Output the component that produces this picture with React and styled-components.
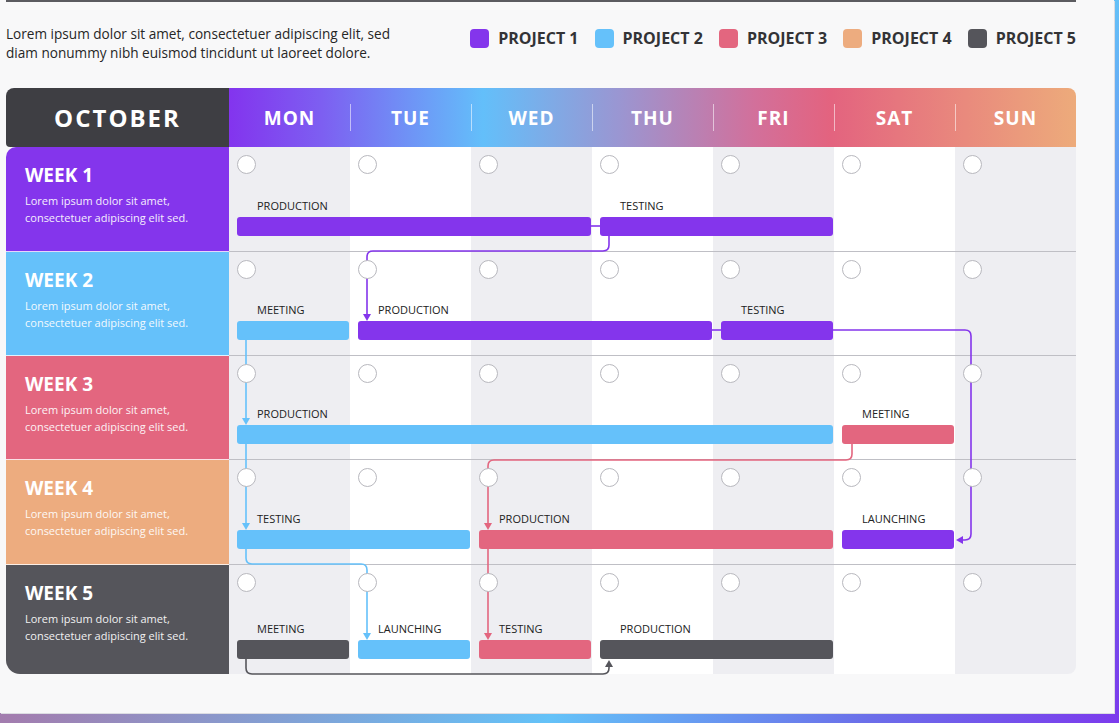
import styled, { createGlobalStyle } from "styled-components";

const GlobalStyle = createGlobalStyle`
  html, body {
    margin: 0;
    padding: 0;
  }
  body {
    width: 1119px;
    height: 723px;
    overflow: hidden;
    background: linear-gradient(128deg, #b07a9c 0%, #a27daf 34%, #64c2f8 66%, #6b6ee9 85%, #7c3aed 100%);
    font-family: "Open Sans", "Liberation Sans", sans-serif;
  }
`;

const colors = {
  1: "#8435ec",
  2: "#65c1fa",
  3: "#e3667f",
  4: "#edac7f",
  5: "#55555b",
};

const days = ["MON", "TUE", "WED", "THU", "FRI", "SAT", "SUN"];

const weeks = [
  {
    name: "WEEK 1",
    color: colors[1],
    height: 105,
    tasks: [
      { label: "PRODUCTION", project: 1, from: 0, to: 2 },
      { label: "TESTING", project: 1, from: 3, to: 4 },
    ],
  },
  {
    name: "WEEK 2",
    color: colors[2],
    height: 104,
    tasks: [
      { label: "MEETING", project: 2, from: 0, to: 0 },
      { label: "PRODUCTION", project: 1, from: 1, to: 3 },
      { label: "TESTING", project: 1, from: 4, to: 4 },
    ],
  },
  {
    name: "WEEK 3",
    color: colors[3],
    height: 104,
    tasks: [
      { label: "PRODUCTION", project: 2, from: 0, to: 4 },
      { label: "MEETING", project: 3, from: 5, to: 5 },
    ],
  },
  {
    name: "WEEK 4",
    color: colors[4],
    height: 105,
    tasks: [
      { label: "TESTING", project: 2, from: 0, to: 1 },
      { label: "PRODUCTION", project: 3, from: 2, to: 4 },
      { label: "LAUNCHING", project: 1, from: 5, to: 5 },
    ],
  },
  {
    name: "WEEK 5",
    color: colors[5],
    height: 109,
    tasks: [
      { label: "MEETING", project: 5, from: 0, to: 0 },
      { label: "LAUNCHING", project: 2, from: 1, to: 1 },
      { label: "TESTING", project: 3, from: 2, to: 2 },
      { label: "PRODUCTION", project: 5, from: 3, to: 4 },
    ],
  },
];

// connector lines, in page coordinates (svg viewBox starts at the table corner)
const links = [
  { color: colors[1], d: "M591 226 H600" },
  { color: colors[1], d: "M609 236 V245 Q609 251 603 251 H373 Q367 251 367 257 V315", arrow: "M363 314 L371 314 L367 321 Z" },
  { color: colors[1], d: "M712 330 H721" },
  { color: colors[1], d: "M833 330 H965 Q971 330 971 336 V534 Q971 540 965 540 H962", arrow: "M963 536 L963 544 L956 540 Z" },
  { color: colors[2], d: "M246 340 V419", arrow: "M242 418 L250 418 L246 425 Z" },
  { color: colors[2], d: "M246 444 V524", arrow: "M242 523 L250 523 L246 530 Z" },
  { color: colors[2], d: "M246 549 V558 Q246 564 252 564 H361 Q367 564 367 570 V634", arrow: "M363 633 L371 633 L367 640 Z" },
  { color: colors[3], d: "M852 444 V454 Q852 460 846 460 H494 Q488 460 488 466 V524", arrow: "M484 523 L492 523 L488 530 Z" },
  { color: colors[3], d: "M488 549 V634", arrow: "M484 633 L492 633 L488 640 Z" },
  { color: colors[5], d: "M246 659 V668 Q246 674 252 674 H603 Q609 674 609 668 V666", arrow: "M605 667 L613 667 L609 660 Z" },
];

const Page = styled.div`
  width: 1114px;
  height: 713px;
  box-sizing: border-box;
  padding: 0 38px 0 6px;
  background: #f8f8f9;
  box-shadow: 1px 1px 0 #dcdce2;
`;

const TopRule = styled.div`
  height: 2px;
  background: #5b5b60;
`;

const TopBar = styled.div`
  display: flex;
  justify-content: space-between;
  align-items: flex-start;
  margin-top: 22px;
`;

const Intro = styled.p`
  margin: 0;
  font-size: 13.6px;
  line-height: 19px;
  color: #262626;
`;

const Legend = styled.div`
  display: flex;
  gap: 16px;
  margin-top: 3px;
`;

const LegendItem = styled.div`
  display: flex;
  align-items: center;
  gap: 9px;
  font-size: 16px;
  font-weight: 700;
  line-height: 22px;
  color: #333336;
`;

const Swatch = styled.span`
  width: 19px;
  height: 19px;
  border-radius: 4px;
  background: ${(p) => p.$color};
`;

const Table = styled.div`
  position: relative;
  width: 1070px;
  margin-top: 26px;
`;

const HeaderRow = styled.div`
  display: grid;
  grid-template-columns: 223px 1fr;
  height: 59px;
`;

const MonthCell = styled.div`
  display: flex;
  align-items: center;
  justify-content: center;
  background: #3e3e43;
  border-radius: 8px 0 0 4px;
  color: #fff;
  font-size: 24px;
  font-weight: 700;
  letter-spacing: 2px;
`;

const DaysBar = styled.div`
  display: grid;
  grid-template-columns: repeat(7, 1fr);
  border-radius: 0 8px 0 0;
  background: linear-gradient(
    90deg,
    #8334ee 0%,
    #7d5ff1 11%,
    #63bffa 30%,
    #9a96d2 46%,
    #d2709b 62%,
    #e3637f 71%,
    #e98a7d 87%,
    #edab7b 100%
  );
`;

const DayHead = styled.div`
  position: relative;
  display: flex;
  align-items: center;
  justify-content: center;
  color: #fff;
  font-size: 19px;
  font-weight: 700;
  letter-spacing: 1px;

  &:not(:first-child)::before {
    content: "";
    position: absolute;
    left: 0;
    top: 16px;
    width: 1px;
    height: 27px;
    background: rgba(255, 255, 255, 0.55);
  }
`;

const WeekRow = styled.div`
  display: grid;
  grid-template-columns: 223px repeat(7, 121px);
  height: ${(p) => p.$height}px;
`;

const WeekCell = styled.div`
  grid-row: 1;
  grid-column: 1;
  box-sizing: border-box;
  padding: 15px 0 0 19px;
  background: ${(p) => p.$color};
  border-bottom: ${(p) => (p.$last ? "none" : "1px solid rgba(255, 255, 255, 0.8)")};
  border-radius: ${(p) => (p.$first ? "10px 0 0 0" : p.$last ? "0 0 0 14px" : "0")};
  color: #fff;
`;

const WeekTitle = styled.div`
  font-size: 19px;
  font-weight: 700;
  line-height: 26px;
`;

const WeekText = styled.div`
  margin-top: 4px;
  font-size: 11px;
  line-height: 17px;
  opacity: 0.92;
`;

const DayCell = styled.div`
  grid-row: 1;
  grid-column: ${(p) => p.$col + 2};
  box-sizing: border-box;
  padding: 8px 0 0 8px;
  background: ${(p) => (p.$col % 2 === 0 ? "#eeeef2" : "#ffffff")};
  border-bottom: ${(p) => (p.$last ? "none" : "1px solid #bfbfc5")};
  border-radius: ${(p) => (p.$last && p.$col === 6 ? "0 0 8px 0" : "0")};
`;

const Circle = styled.div`
  position: relative;
  z-index: 2;
  width: 19px;
  height: 19px;
  box-sizing: border-box;
  border: 1.5px solid #b8b8be;
  border-radius: 50%;
  background: #fff;
`;

const Task = styled.div`
  position: relative;
  z-index: 2;
  grid-row: 1;
  grid-column: ${(p) => `${p.$from + 2} / ${p.$to + 3}`};
  align-self: end;
  margin: 0 1px ${(p) => (p.$last ? 15 : 16)}px 8px;
`;

const TaskLabel = styled.div`
  padding-left: 20px;
  margin-bottom: 4px;
  font-size: 11px;
  line-height: 15px;
  color: #222;
`;

const Bar = styled.div`
  height: 19px;
  border-radius: 3px;
  background: ${(p) => p.$color};
`;

const Links = styled.svg`
  position: absolute;
  left: 0;
  top: 0;
  z-index: 1;
  overflow: visible;
  pointer-events: none;
`;

export default function App() {
  return (
    <>
      <GlobalStyle />
      <Page>
        <TopRule />
        <TopBar>
          <Intro>
            Lorem ipsum dolor sit amet, consectetuer adipiscing elit, sed
            <br />
            diam nonummy nibh euismod tincidunt ut laoreet dolore.
          </Intro>
          <Legend>
            {[1, 2, 3, 4, 5].map((n) => (
              <LegendItem key={n}>
                <Swatch $color={colors[n]} />
                PROJECT {n}
              </LegendItem>
            ))}
          </Legend>
        </TopBar>

        <Table>
          <HeaderRow>
            <MonthCell>OCTOBER</MonthCell>
            <DaysBar>
              {days.map((d) => (
                <DayHead key={d}>{d}</DayHead>
              ))}
            </DaysBar>
          </HeaderRow>

          {weeks.map((w, i) => {
            const last = i === weeks.length - 1;
            return (
              <WeekRow key={w.name} $height={w.height}>
                <WeekCell $color={w.color} $first={i === 0} $last={last}>
                  <WeekTitle>{w.name}</WeekTitle>
                  <WeekText>
                    Lorem ipsum dolor sit amet,
                    <br />
                    consectetuer adipiscing elit sed.
                  </WeekText>
                </WeekCell>
                {days.map((d, c) => (
                  <DayCell key={d} $col={c} $last={last}>
                    <Circle />
                  </DayCell>
                ))}
                {w.tasks.map((t) => (
                  <Task key={t.label + t.from} $from={t.from} $to={t.to} $last={last}>
                    <TaskLabel>{t.label}</TaskLabel>
                    <Bar $color={colors[t.project]} />
                  </Task>
                ))}
              </WeekRow>
            );
          })}

          <Links width="1070" height="586" viewBox="6 88 1070 586">
            {links.map((l, i) => (
              <g key={i}>
                <path d={l.d} fill="none" stroke={l.color} strokeWidth="1.6" />
                {l.arrow && <path d={l.arrow} fill={l.color} />}
              </g>
            ))}
          </Links>
        </Table>
      </Page>
    </>
  );
}
